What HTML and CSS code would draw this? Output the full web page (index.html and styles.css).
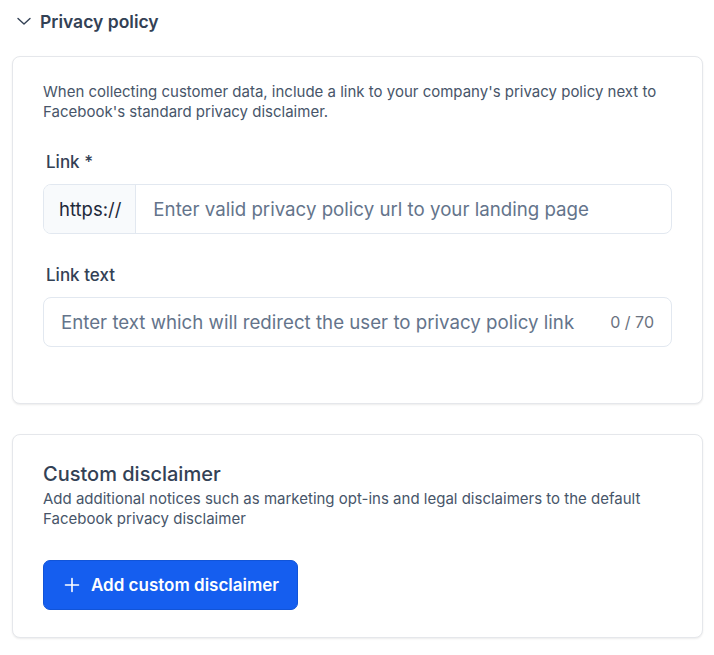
FILE: index.html
```html
<!DOCTYPE html>
<html>
<head>
    <title>Privacy policy</title>
    <link rel="stylesheet" href="styles.css">
</head>
<body>
    <div class="page">
        <div class="section-header">
            <svg class="chevron" width="16" height="16" viewBox="0 0 16 16">
                <path d="M2 5.5 L8 11 L14 5.5" fill="none" stroke="#334155" stroke-width="1.4" stroke-linecap="round" stroke-linejoin="round"/>
            </svg>
            <span class="section-title">Privacy policy</span>
        </div>

        <div class="card policy-card">
            <p class="help-text">When collecting customer data, include a link to your company's privacy policy next to Facebook's standard privacy disclaimer.</p>

            <label class="field-label">Link *</label>
            <div class="input-group">
                <span class="prefix">https://</span>
                <input type="text" class="text-input" placeholder="Enter valid privacy policy url to your landing page">
            </div>

            <label class="field-label second">Link text</label>
            <div class="input-group">
                <input type="text" class="text-input with-counter" placeholder="Enter text which will redirect the user to privacy policy link">
                <span class="counter">0 / 70</span>
            </div>
        </div>

        <div class="card disclaimer-card">
            <h3 class="card-title">Custom disclaimer</h3>
            <p class="help-text">Add additional notices such as marketing opt-ins and legal disclaimers to the default Facebook privacy disclaimer</p>
            <button class="primary-button">
                <svg width="16" height="16" viewBox="0 0 16 16">
                    <path d="M8 1.5 V14.5 M1.5 8 H14.5" stroke="#fff" stroke-width="1.6" stroke-linecap="round"/>
                </svg>
                Add custom disclaimer
            </button>
        </div>
    </div>
</body>
</html>
```

FILE: styles.css
```css
body {
    margin: 0;
    font-family: Inter, "Noto Sans", sans-serif;
    background-color: #ffffff;
    color: #334155;
}

.page {
    padding: 0 11px 20px 12px;
}

.section-header {
    display: flex;
    align-items: center;
    gap: 8px;
    height: 42px;
    padding-left: 4px;
}

.section-title {
    font-size: 17.5px;
    font-weight: 600;
    color: #334155;
}

.card {
    background-color: #ffffff;
    border: 1px solid #e5e7eb;
    border-radius: 8px;
    box-shadow: 0 1px 2px rgba(0, 0, 0, 0.08);
    padding: 25px 30px 56px 30px;
}

.policy-card {
    margin-top: 14px;
}

.help-text {
    margin: 0;
    font-size: 15px;
    line-height: 20px;
    color: #475569;
}

.field-label {
    display: block;
    margin: 28px 0 10px 3px;
    font-size: 17px;
    line-height: 24px;
    font-weight: 500;
    color: #334155;
}

.field-label.second {
    margin-top: 29px;
}

.input-group {
    display: flex;
    align-items: center;
    height: 48px;
    border: 1px solid #e2e8f0;
    border-radius: 8px;
    overflow: hidden;
    background-color: #ffffff;
}

.prefix {
    display: flex;
    align-items: center;
    height: 100%;
    padding: 0 14px 0 15px;
    background-color: #f8fafc;
    border-right: 1px solid #e2e8f0;
    font-size: 18.5px;
    color: #1e293b;
}

.text-input {
    flex: 1;
    min-width: 0;
    height: 100%;
    border: none;
    outline: none;
    padding: 0 17px;
    font-family: inherit;
    font-size: 18.7px;
    color: #1e293b;
    background: transparent;
}

.text-input::placeholder {
    color: #64748b;
}

.counter {
    padding-right: 17px;
    font-size: 16px;
    color: #6b7280;
}

.disclaimer-card {
    margin-top: 30px;
    padding-top: 25px;
    padding-bottom: 27px;
}

.card-title {
    margin: 0 0 1px 0;
    font-size: 20px;
    line-height: 28px;
    font-weight: 500;
    color: #334155;
}

.primary-button {
    display: flex;
    align-items: center;
    gap: 11px;
    margin-top: 31px;
    height: 50px;
    padding: 0 18px 0 20px;
    background-color: #155eef;
    border: 1px solid #1154d8;
    border-radius: 7px;
    color: #ffffff;
    font-family: inherit;
    font-size: 17px;
    font-weight: 600;
    cursor: pointer;
}
```
